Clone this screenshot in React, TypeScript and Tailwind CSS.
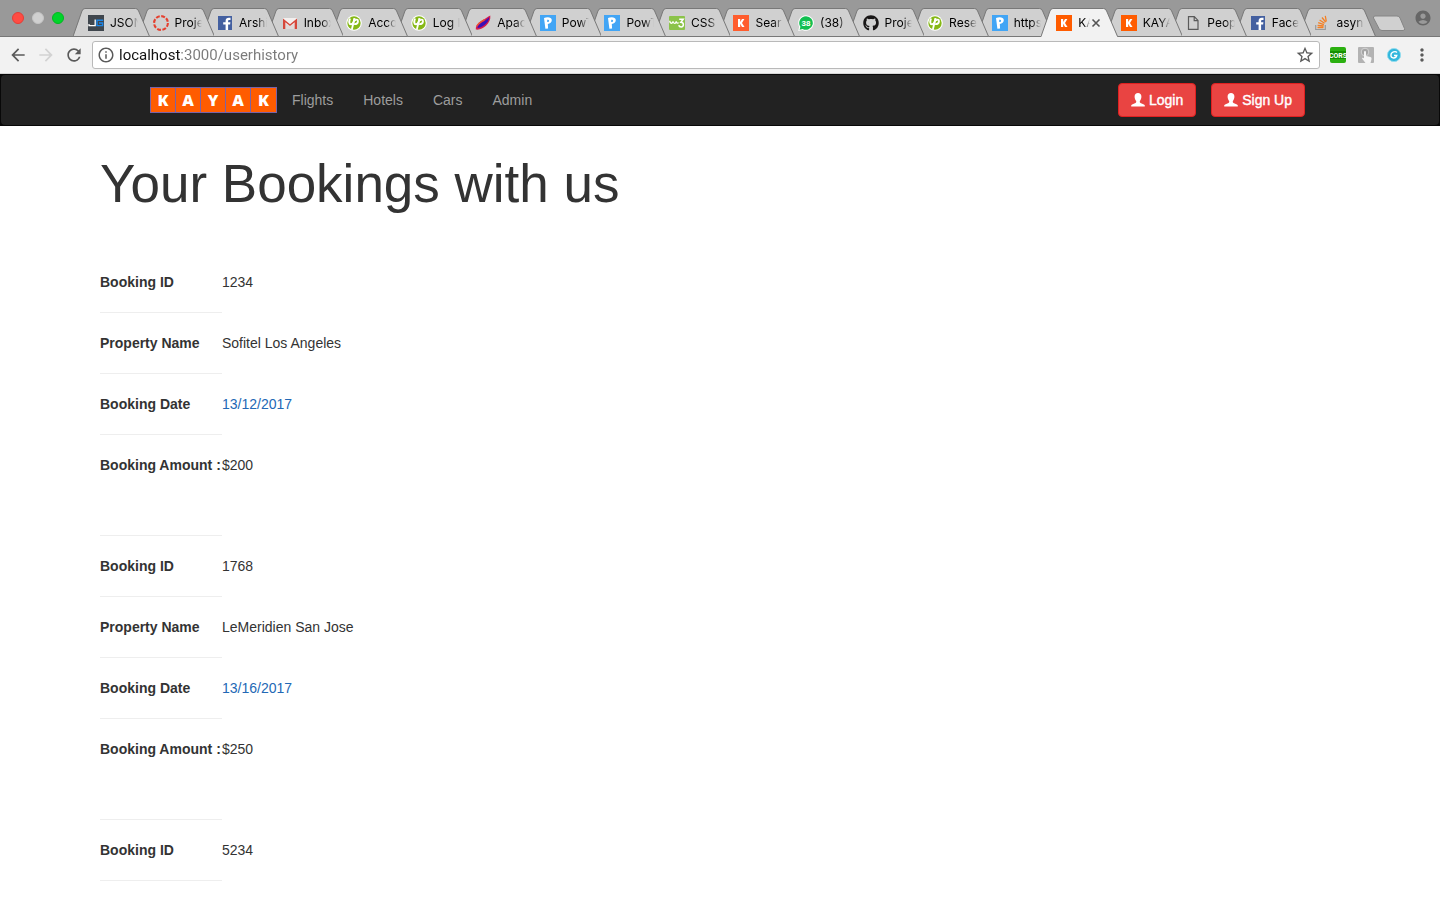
import React from "react";
import {
  MdArrowBack,
  MdArrowForward,
  MdRefresh,
  MdStarBorder,
  MdAccountCircle,
  MdInfoOutline,
  MdMoreVert,
} from "react-icons/md";
import { FaGithub } from "react-icons/fa";

function JsonIcon() {
  return (
    <svg viewBox="0 0 16 16" className="size-4">
      <rect width="16" height="16" fill="#3f464d" />
      <path d="M7.200 4.600v6H1v-1.600" fill="none" stroke="#fff" strokeWidth="1.300" />
      <path d="M15.200 5.200H9v5.400h5.600V8H11" fill="none" stroke="#1c86e8" strokeWidth="1.400" />
    </svg>
  );
}

function RingIcon() {
  return (
    <svg viewBox="0 0 16 16" className="size-4">
      <circle cx="8" cy="8" r="6.900" fill="none" stroke="#e5402f" strokeWidth="2.100" strokeDasharray="3.900 1.520" />
    </svg>
  );
}

function FacebookIcon() {
  return (
    <svg viewBox="0 0 16 16" className="size-4">
      <rect x="1" y="1" width="14" height="14" fill="#4460a0" />
      <path d="M8.600 15V9.600H6.200V7.300h2.400V6c0-2.200 1.300-3.300 3.200-3.300.8 0 1.500.1 1.700.1v2.100h-1.200c-.9 0-1.200.4-1.200 1.100v1.300h2.300l-.3 2.300h-2V15z" fill="#fff" />
    </svg>
  );
}

function GmailIcon() {
  return (
    <svg viewBox="0 0 16 16" className="size-4">
      <path d="M1 3h14v11H1z" fill="#f3efee" />
      <path d="M3 8.200 8 11l5-2.800V14H3z" fill="#e0dbda" />
      <path d="M1 3.400 8 9.200l7-5.800V14h-2.300V7.200L8 11 3.300 7.200V14H1z" fill="#d6483b" />
    </svg>
  );
}

function LeafIcon() {
  return (
    <svg viewBox="0 0 16 16" className="size-4">
      <circle cx="8" cy="8" r="7.800" fill="#fff" />
      <circle cx="8" cy="8" r="6.700" fill="#86b817" />
      <path d="M4 3.500C2.800 6.500 3 9.300 5 9.300c1.800 0 3-2.600 3.500-6" fill="none" stroke="#fff" strokeWidth="2" />
      <path d="M8.600 3.300 5.800 14.800" fill="none" stroke="#fff" strokeWidth="1.800" />
      <path d="M8.800 5.800C10 4 12.200 4.300 12 6.300c-.2 1.900-1.900 3-3.900 2.900" fill="none" stroke="#fff" strokeWidth="1.800" />
    </svg>
  );
}

function FeatherIcon() {
  return (
    <svg viewBox="0 0 16 16" className="size-4">
      <path d="M.8 14.500C.8 10 3.500 7.300 7.500 5.300 10.500 3.800 12.600 1.500 15.300.6c.5 4-1.300 7.500-4.300 10.200-3 2.700-6.700 4.400-10.200 3.700z" fill="#d81e4e" />
      <path d="M2.500 13C3 9.500 6.500 7.800 9.500 6c2.200-1.400 3.300-2.700 4.700-3.900.1 3-2 6-4.700 8-2.500 2-5 2.900-7 2.900z" fill="#3a10b8" />
      <path d="M1.800 11C3 8.500 7 6.400 9.500 4.500" fill="none" stroke="#ee5a32" strokeWidth="1.300" />
    </svg>
  );
}

function PowIcon() {
  return (
    <svg viewBox="0 0 16 16" className="size-4">
      <rect width="16" height="16" fill="#42a5f5" />
      <path d="M4 3c3-1.200 7.600-1.200 7.800 2 .1 2.400-1.800 3.700-4 3.900l.3 4.700-2.700.2z" fill="#fff" />
      <path d="M7.200 4.800v2.300c1.300-.1 2-.6 1.900-1.400-.1-.8-.9-1-1.900-.9z" fill="#42a5f5" />
    </svg>
  );
}

function W3Icon() {
  return (
    <svg viewBox="0 0 16 16" className="size-4">
      <rect y="1" width="16" height="14" rx="1" fill="#8bc34a" />
      <path d="M.8 5.800c0 3.200 2.900 3.200 3.200.4.200 2.800 3 2.800 3.200.2.300 1.600 1.500 2.200 2.400 1.200" fill="none" stroke="#fff" strokeWidth="1.300" />
      <path d="M10.200 4.200h4l-2.300 3c3.300 0 3.200 4.700.3 4.700-1.300 0-2.200-.6-2.500-1.700" fill="none" stroke="#fff" strokeWidth="1.500" />
    </svg>
  );
}

function KayakIcon({ soft = false }: { soft?: boolean }) {
  return (
    <svg viewBox="0 0 16 16" className="size-4">
      <rect width="16" height="16" fill={soft ? "#ff5d2e" : "#ff5c00"} />
      <path d="M5 4h2.200v3.100L9 4h2.400L9 7.900l2.500 4.100H9L7.200 8.800V12H5z" fill="#fff" />
    </svg>
  );
}

function WhatsappIcon() {
  return (
    <svg viewBox="0 0 16 16" className="size-4">
      <path d="M8 .2a7.800 7.800 0 1 1-3.600 14.700L.2 16l1-4.200A7.800 7.800 0 0 1 8 .2z" fill="#fff" />
      <path d="M8 1.200a6.800 6.800 0 1 1-3.400 12.700l-3 .8.800-2.900A6.800 6.800 0 0 1 8 1.200z" fill="#12bf50" />
      <text x="8" y="11" textAnchor="middle" fontSize="8" fontWeight="700" fontFamily="Liberation Sans, sans-serif" fill="#fff">
        38
      </text>
    </svg>
  );
}

function PageIcon() {
  return (
    <svg viewBox="0 0 16 16" className="size-4">
      <path d="M3.500 1.700h5.800l3.700 3.700v8.900H3.500zM9.200 1.900v3.700h3.700" fill="none" stroke="#5a5a5a" strokeWidth="1.200" />
    </svg>
  );
}

function StackIcon() {
  return (
    <svg viewBox="0 0 16 16" className="size-4">
      <path d="M1.700 10v4.500h9.600V10" fill="none" stroke="#9a9a9a" strokeWidth="1.200" />
      <path d="M3.500 12.500h6M3.600 10.300l6 .7M4.200 7.700l5.700 1.900M5.600 5l5 3.200M8 2.500l3.700 4.700M11.300.8l1 5.700" fill="none" stroke="#f48024" strokeWidth="1.300" />
    </svg>
  );
}

type TabItem = { title: string; icon: React.ReactNode; active?: boolean };

const tabs: TabItem[] = [
  { title: "JSON", icon: <JsonIcon /> },
  { title: "Project", icon: <RingIcon /> },
  { title: "Arshi", icon: <FacebookIcon /> },
  { title: "Inbox", icon: <GmailIcon /> },
  { title: "Acco", icon: <LeafIcon /> },
  { title: "Log In", icon: <LeafIcon /> },
  { title: "Apac", icon: <FeatherIcon /> },
  { title: "PowT", icon: <PowIcon /> },
  { title: "PowT", icon: <PowIcon /> },
  { title: "CSS", icon: <W3Icon /> },
  { title: "Sear", icon: <KayakIcon soft /> },
  { title: "(38)", icon: <WhatsappIcon /> },
  { title: "Proje", icon: <FaGithub className="size-4 text-[#181616]" /> },
  { title: "Rese", icon: <LeafIcon /> },
  { title: "https", icon: <PowIcon /> },
  { title: "KA", icon: <KayakIcon />, active: true },
  { title: "KAYA", icon: <KayakIcon /> },
  { title: "Peop", icon: <PageIcon /> },
  { title: "Face", icon: <FacebookIcon /> },
  { title: "asyn", icon: <StackIcon /> },
];

function Tab({ tab, order }: { tab: TabItem; order: number }) {
  return (
    <li className="relative flex h-7 min-w-0 flex-1 basis-0 items-center" style={{ zIndex: order }}>
      <svg
        viewBox="0 0 77 29"
        preserveAspectRatio="none"
        className="absolute top-0 left-0 h-[29px] w-[calc(100%+12px)]"
        aria-hidden="true"
      >
        <path d="M0 29L9 3Q10 .5 12 .5H63Q65 .5 66 3L77 29z" fill={tab.active ? "#f2f2f2" : "#d0d0d0"} />
        <path
          d={
            tab.active
              ? "M0 28.500L9 3Q10 .5 12 .5H63Q65 .5 66 3L77 28.500"
              : "M0 28.500L9 3Q10 .5 12 .5H63Q65 .5 66 3L77 28.500z"
          }
          fill="none"
          stroke="#777"
        />
      </svg>
      <a href="#" className="relative flex min-w-0 flex-1 items-center gap-1.5 pt-0.5 pl-[15px]">
        <span className="shrink-0">{tab.icon}</span>
        <span
          className={
            "min-w-0 overflow-hidden font-[Inter,sans-serif] text-[12px] leading-4 whitespace-nowrap text-black " +
            (tab.active
              ? "w-3 [mask-image:linear-gradient(to_right,black_50%,transparent)]"
              : "flex-1 [mask-image:linear-gradient(to_right,black_65%,transparent)]")
          }
        >
          {tab.title}
        </span>
      </a>
      {tab.active && (
        <button type="button" aria-label="Close tab" className="relative mr-1 flex size-3 items-center justify-center pt-0.5">
          <svg viewBox="0 0 10 10" className="size-2.5 shrink-0">
            <path d="M1.500 1.500l7 7M8.500 1.500l-7 7" stroke="#555" strokeWidth="1.600" />
          </svg>
        </button>
      )}
    </li>
  );
}

function TabStrip() {
  return (
    <div className="flex h-[37px] items-end border-b border-[#777] bg-[#999]">
      <div className="flex h-full shrink-0 items-center gap-2 pr-[9px] pl-3">
        <button type="button" aria-label="Close" className="size-3 rounded-full border border-[#e33e37] bg-[#ff4c43]" />
        <button type="button" aria-label="Minimise" className="size-3 rounded-full border border-[#c4c4c4] bg-[#d0d0d0]" />
        <button type="button" aria-label="Zoom" className="size-3 rounded-full border border-[#00b81f] bg-[#00d42a]" />
      </div>
      <ul className="isolate flex min-w-0 flex-1">
        {tabs.map((tab, i) => (
          <Tab key={i} tab={tab} order={tab.active ? tabs.length + 1 : tabs.length - i} />
        ))}
      </ul>
      <button type="button" aria-label="New tab" className="mb-1 ml-2 shrink-0">
        <svg viewBox="0 0 34 17" className="h-[17px] w-[34px]">
          <path d="M3 1h22q2 0 3 2l4.500 10.500q.8 2-1.500 2H10q-2 0-3-2L1.500 3Q1 1 3 1z" fill="#d0d0d0" stroke="#858585" />
        </svg>
      </button>
      <button type="button" aria-label="Profile" className="mr-2 ml-2 flex h-full shrink-0 items-center">
        <MdAccountCircle className="size-[18px] text-[#666]" />
      </button>
    </div>
  );
}

function Toolbar() {
  return (
    <div className="flex h-[37px] items-center gap-2.5 border-b border-[#d5d5d5] bg-[#f2f2f2] pr-2 pl-2 text-[#5a5a5a]">
      <div className="flex gap-2">
        <button type="button" aria-label="Back"><MdArrowBack className="size-5" /></button>
        <button type="button" aria-label="Forward"><MdArrowForward className="size-5 text-[#d2d2d2]" /></button>
        <button type="button" aria-label="Reload"><MdRefresh className="size-5" /></button>
      </div>
      <div className="-ml-0.5 flex h-7 min-w-0 flex-1 items-center gap-1 rounded-[3px] border border-[#b9b9b9] bg-white px-1">
        <MdInfoOutline className="size-[18px] shrink-0" />
        <input
          type="text"
          aria-label="Address"
          defaultValue="localhost:3000/userhistory"
          className="min-w-0 flex-1 bg-transparent bg-[linear-gradient(to_right,#111_61px,#7a7a7a_61px)] bg-clip-text font-[Roboto,sans-serif] text-[15px] leading-5 text-transparent outline-none"
        />
        <button type="button" aria-label="Bookmark"><MdStarBorder className="size-5" /></button>
      </div>
      <div className="flex items-center gap-3">
        <button type="button" aria-label="CORS">
          <svg viewBox="0 0 16 16" className="size-4">
            <rect width="16" height="16" rx="2" fill="#2bb010" />
            <rect y="4" width="16" height="8" fill="#159000" />
            <text x="8" y="10.500" textAnchor="middle" fontSize="7" fontWeight="700" fontFamily="Liberation Sans Narrow, Roboto, sans-serif" fill="#fff">
              CORS
            </text>
          </svg>
        </button>
        <button type="button" aria-label="Touch">
          <svg viewBox="0 0 16 16" className="size-4">
            <rect width="16" height="16" rx="1" fill="#b3b3b3" />
            <circle cx="7" cy="5" r="3.800" fill="#a5a5a5" stroke="#d4d4d4" />
            <path d="M6 4.500q1-1 2 0V9l4.500 1q1.500.5 1 2.200L12.500 16h-5L4 11.500q.3-1.500 2-.3z" fill="#f5f5f5" />
          </svg>
        </button>
        <button type="button" aria-label="Grammar">
          <svg viewBox="0 0 16 16" className="size-4">
            <circle cx="8" cy="8" r="6.600" fill="#32b7dc" stroke="#93dcee" strokeWidth="1" />
            <path d="M11 5.500C9.500 3.800 5 4.700 4.900 8.300c0 3.400 5 3.700 5.900.2H8" fill="none" stroke="#fff" strokeWidth="1.300" />
          </svg>
        </button>
        <button type="button" aria-label="Menu" className="-ml-0.5"><MdMoreVert className="size-5" /></button>
      </div>
    </div>
  );
}

function UserGlyph() {
  return (
    <svg viewBox="0 0 14 14" className="size-3.5 shrink-0" fill="currentColor" aria-hidden="true">
      <path d="M7 0c2.100 0 3.400 1.400 3.400 3.500 0 1.900-.7 3.600-1.600 4.500v1.100c0 .5.300.7.700.9l3.400 1.400c.6.2.9.600.9 1.100V13.500H.2v-1c0-.5.3-.9.900-1.100L4.500 10c.4-.2.700-.4.700-.9V8c-.9-.9-1.600-2.600-1.600-4.500C3.600 1.400 4.900 0 7 0z" />
    </svg>
  );
}

function KayakLogo() {
  return (
    <a href="#" aria-label="Kayak home" className="flex border border-[#7a63a8] bg-[#ff5c00]">
      {["K", "A", "Y", "A", "K"].map((letter, i) => (
        <span
          key={i}
          className="flex h-6 w-[25px] items-center justify-center border-r border-[#7a63a8] font-['Open_Sans',sans-serif] text-base leading-6 font-extrabold text-white last:border-r-0"
        >
          {letter}
        </span>
      ))}
    </a>
  );
}

function Navbar() {
  return (
    <nav className="bg-[#080808] p-px">
      <div className="rounded bg-[#222]">
        <div className="mx-auto flex h-[50px] max-w-[1170px] items-center justify-between pl-[15px]">
          <div className="flex items-center gap-[15px]">
            <KayakLogo />
            <div className="flex gap-[30px] text-sm leading-5 text-[#9d9d9d]">
              <a href="#">Flights</a>
              <a href="#">Hotels</a>
              <a href="#">Cars</a>
              <a href="#">Admin</a>
            </div>
          </div>
          <div className="flex gap-[15px]">
            {["Login", "Sign Up"].map((label) => (
              <button
                key={label}
                type="button"
                className="flex h-[34px] items-center gap-1 rounded border border-[#e02020] bg-[#e94442] px-3 text-sm leading-5 text-white [-webkit-text-stroke:0.4px_white]"
              >
                <UserGlyph />
                {label}
              </button>
            ))}
          </div>
        </div>
      </div>
    </nav>
  );
}

type Booking = { label: string; value: string; kind?: "link" | "last" }[];

const bookings: Booking[] = [
  [
    { label: "Booking ID", value: "1234" },
    { label: "Property Name", value: "Sofitel Los Angeles" },
    { label: "Booking Date", value: "13/12/2017", kind: "link" },
    { label: "Booking Amount :", value: "$200", kind: "last" },
  ],
  [
    { label: "Booking ID", value: "1768" },
    { label: "Property Name", value: "LeMeridien San Jose" },
    { label: "Booking Date", value: "13/16/2017", kind: "link" },
    { label: "Booking Amount :", value: "$250", kind: "last" },
  ],
  [{ label: "Booking ID", value: "5234" }],
];

function BookingsTable() {
  return (
    <table className="border-separate border-spacing-0 text-left text-sm leading-5">
      {bookings.map((rows, i) => (
        <tbody key={i}>
          {rows.map((row) => (
            <tr key={row.label} className="align-top">
              <th
                scope="row"
                className={
                  "w-[122px] border-b border-[#eee] pt-5 font-bold whitespace-nowrap " +
                  (row.kind === "last" ? "pb-[60px]" : "pb-5")
                }
              >
                {row.label}
              </th>
              <td className="pt-5">
                {row.kind === "link" ? (
                  <a href="#" className="text-[#2368b5]">{row.value}</a>
                ) : (
                  row.value
                )}
              </td>
            </tr>
          ))}
        </tbody>
      ))}
    </table>
  );
}

export default function App() {
  return (
    <div className="min-h-screen bg-white font-['Liberation_Sans',Arial,sans-serif] text-[#333]">
      <TabStrip />
      <Toolbar />
      <Navbar />
      <main className="px-[100px] pt-7">
        <h1 className="mb-[38px] text-[53px] leading-[60px]">Your Bookings with us</h1>
        <BookingsTable />
      </main>
    </div>
  );
}
